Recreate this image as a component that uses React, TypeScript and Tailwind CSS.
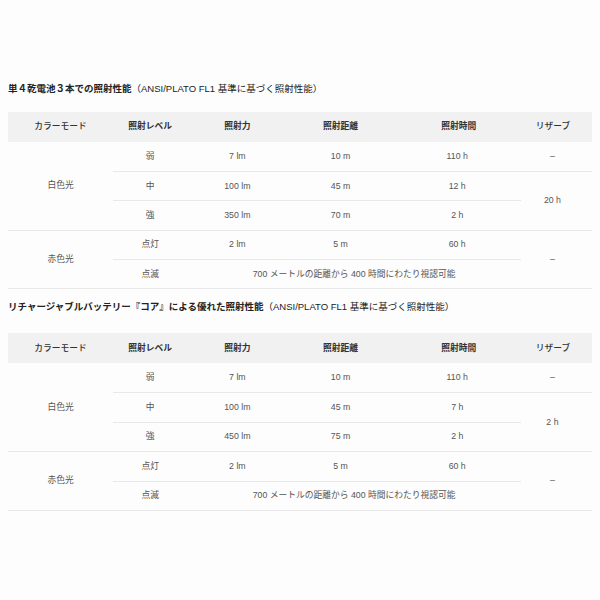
import React from "react";

type Row = {
  mode?: { label: string; span: number };
  level: string;
  cells?: [string, string, string];
  wide?: string;
  reserve?: { label: string; span: number };
};

const line = "border-b border-[#e8e8e8]";

function SpecTable({ rows }: { rows: Row[] }) {
  return (
    <table className="w-full border-collapse table-fixed text-[8.75px] text-[#555]">
      <colgroup>
        <col className="w-[105px]" />
        <col className="w-[74px]" />
        <col className="w-[100px]" />
        <col className="w-[106px]" />
        <col className="w-[127px]" />
        <col className="w-[71px]" />
      </colgroup>
      <thead>
        <tr className="h-[30px] bg-[#f1f1f1] text-[#333] font-medium">
          <th className="font-medium">カラーモード</th>
          <th className="font-bold">照射レベル</th>
          <th className="font-bold">照射力</th>
          <th className="font-bold">照射距離</th>
          <th className="font-bold pl-[3px]">照射時間</th>
          <th className="font-medium pr-[7px]">リザーブ</th>
        </tr>
      </thead>
      <tbody>
        {rows.map((r, i) => (
          <tr key={i} className="h-[29.4px]">
            {r.mode && (
              <td rowSpan={r.mode.span} className={`text-center ${line}`}>
                {r.mode.label}
              </td>
            )}
            <td className={`text-center ${line}`}>{r.level}</td>
            {r.cells ? (
              r.cells.map((c, j) => (
                <td key={j} className={`text-center ${line}`}>
                  {c}
                </td>
              ))
            ) : (
              <td colSpan={3} className={`text-center ${line}`}>
                {r.wide}
              </td>
            )}
            {r.reserve && (
              <td rowSpan={r.reserve.span} className={`text-center pr-[8px] ${line}`}>
                {r.reserve.label}
              </td>
            )}
          </tr>
        ))}
      </tbody>
    </table>
  );
}

const wide = "700 メートルの距離から 400 時間にわたり視認可能";

const rows1: Row[] = [
  { mode: { label: "白色光", span: 3 }, level: "弱", cells: ["7 lm", "10 m", "110 h"], reserve: { label: "–", span: 1 } },
  { level: "中", cells: ["100 lm", "45 m", "12 h"], reserve: { label: "20 h", span: 2 } },
  { level: "強", cells: ["350 lm", "70 m", "2 h"] },
  { mode: { label: "赤色光", span: 2 }, level: "点灯", cells: ["2 lm", "5 m", "60 h"], reserve: { label: "–", span: 2 } },
  { level: "点滅", wide },
];

const rows2: Row[] = [
  { mode: { label: "白色光", span: 3 }, level: "弱", cells: ["7 lm", "10 m", "110 h"], reserve: { label: "–", span: 1 } },
  { level: "中", cells: ["100 lm", "45 m", "7 h"], reserve: { label: "2 h", span: 2 } },
  { level: "強", cells: ["450 lm", "75 m", "2 h"] },
  { mode: { label: "赤色光", span: 2 }, level: "点灯", cells: ["2 lm", "5 m", "60 h"], reserve: { label: "–", span: 2 } },
  { level: "点滅", wide },
];

export default function App() {
  return (
    <div
      className="w-[600px] h-[600px] bg-[#fdfdfd] px-[8px] pt-[81px] text-[#333]"
      style={{ fontFamily: '"Liberation Sans", "Noto Sans CJK JP", sans-serif' }}
    >
      <h2 className="text-[9.5px] leading-[16px] text-[#222] whitespace-nowrap">
        <span className="font-bold">単４乾電池３本での照射性能</span>
        <span className="font-normal">（ANSI/PLATO FL1 基準に基づく照射性能）</span>
      </h2>
      <div className="mt-[15px]">
        <SpecTable rows={rows1} />
      </div>
      <h2 className="mt-[10px] text-[9.5px] leading-[16px] text-[#222] whitespace-nowrap">
        <span className="font-bold">リチャージャブルバッテリー『コア』による優れた照射性能</span>
        <span className="font-normal">（ANSI/PLATO FL1 基準に基づく照射性能）</span>
      </h2>
      <div className="mt-[18px]">
        <SpecTable rows={rows2} />
      </div>
    </div>
  );
}
